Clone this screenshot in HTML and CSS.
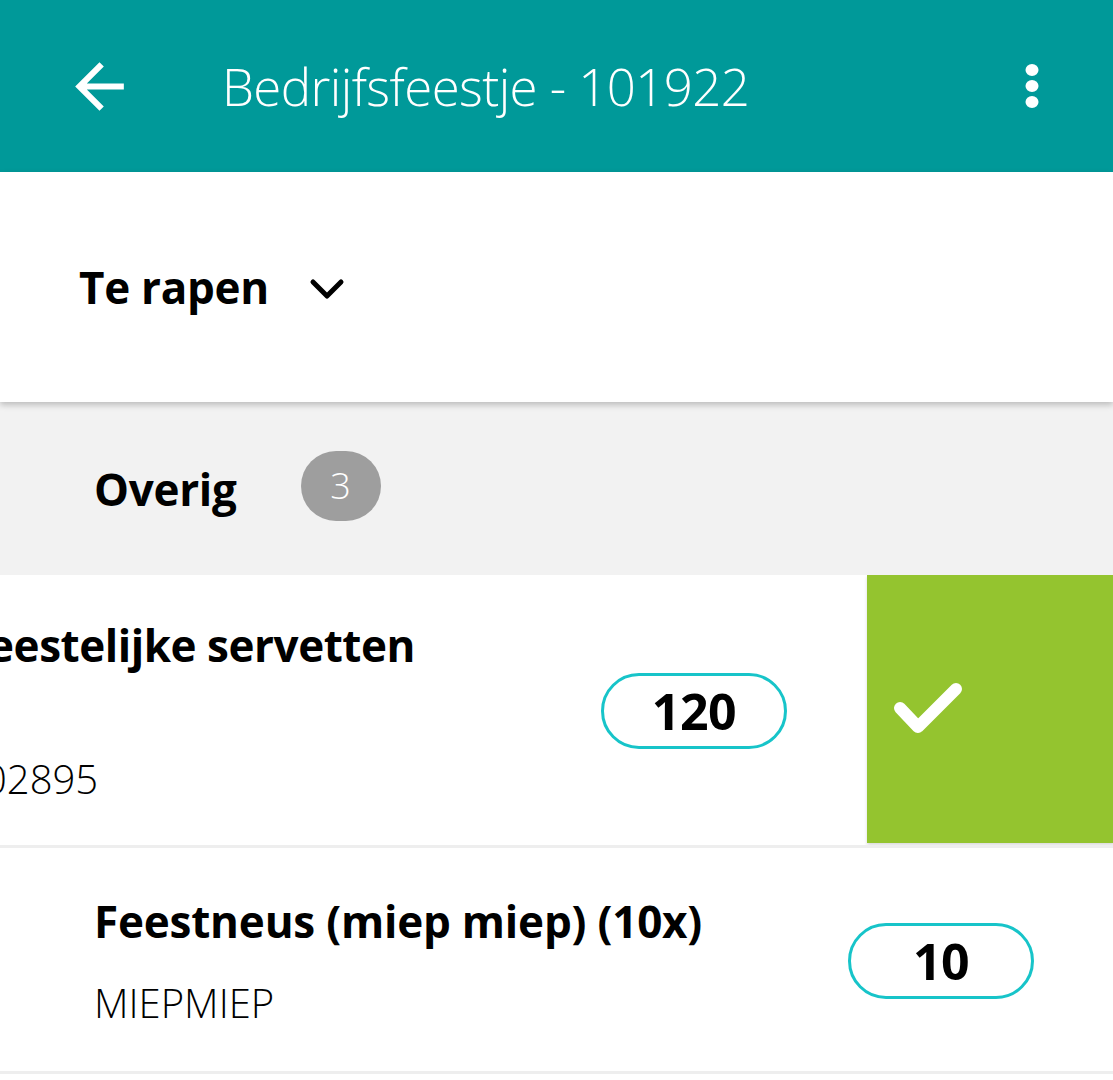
FILE: index.html
```html
<html lang="nl">
<head>
    <meta charset="UTF-8">
    <meta name="viewport" content="width=device-width, initial-scale=1.0">
    <title>Bedrijfsfeestje - 101922</title>
    <link rel="stylesheet" href="styles.css">
</head>
<body>
    <div class="app-bar">
        <button class="icon-button back-button" aria-label="Terug">
            <svg width="73" height="73" viewBox="0 0 24 24">
                <path d="M20 11H7.83l5.59-5.59L12 4l-8 8 8 8 1.41-1.41L7.83 13H20v-2z" fill="#fff"/>
            </svg>
        </button>
        <h1 class="app-title">Bedrijfsfeestje - 101922</h1>
        <button class="icon-button menu-button" aria-label="Menu">
            <svg width="16" height="44" viewBox="0 0 16 44">
                <ellipse cx="8" cy="6" rx="6.5" ry="6"/>
                <ellipse cx="8" cy="22" rx="6.5" ry="6"/>
                <ellipse cx="8" cy="38" rx="6.5" ry="6"/>
            </svg>
        </button>
    </div>

    <div class="filter-bar">
        <span class="filter-label">Te rapen</span>
        <svg class="chevron" width="36" height="22" viewBox="0 0 36 22">
            <path d="M4 4l14 14L32 4" fill="none" stroke="#000" stroke-width="5" stroke-linecap="round" stroke-linejoin="round"/>
        </svg>
    </div>

    <div class="group-header">
        <span class="group-name">Overig</span>
        <span class="badge">3</span>
    </div>

    <div class="row-wrap">
        <div class="pick-row swiped">
            <div class="pick-info">
                <div class="pick-name">Extra feestelijke servetten</div>
                <div class="pick-spacer"></div>
                <div class="pick-sku">87100102895</div>
            </div>
            <div class="qty">120</div>
        </div>
        <div class="swipe-action">
            <svg width="70" height="54" viewBox="0 0 70 54">
                <path d="M7 26l18 19L63 7" fill="none" stroke="#fff" stroke-width="12" stroke-linecap="round" stroke-linejoin="round"/>
            </svg>
        </div>
    </div>

    <div class="row-wrap">
        <div class="pick-row">
            <div class="pick-info">
                <div class="pick-name">Feestneus (miep miep) (10x)</div>
                <div class="pick-sku">MIEPMIEP</div>
            </div>
            <div class="qty">10</div>
        </div>
    </div>
</body>
</html>
```

FILE: styles.css
```css
body {
    margin: 0;
    font-family: "Open Sans", "Noto Sans", sans-serif;
    color: #000;
    background: #fff;
    overflow: hidden;
}

.app-bar {
    height: 172px;
    background-color: #009999;
    display: flex;
    align-items: center;
    color: #fff;
}

.icon-button {
    background: none;
    border: none;
    padding: 0;
    display: flex;
    align-items: center;
    justify-content: center;
    fill: #fff;
}

.back-button {
    margin-left: 63px;
    width: 73px;
    height: 73px;
}

.app-title {
    margin: 0 0 0 86px;
    font-size: 51px;
    font-weight: 300;
    letter-spacing: -0.6px;
    flex: 1;
}

.menu-button {
    margin-right: 73px;
}

.filter-bar {
    height: 230px;
    display: flex;
    align-items: center;
    padding-left: 79px;
    background: #fff;
    box-shadow: 0 3px 6px rgba(0, 0, 0, 0.22);
    position: relative;
}

.filter-label {
    font-size: 44px;
    font-weight: 700;
    letter-spacing: -0.3px;
}

.chevron {
    margin-left: 40px;
    margin-top: 4px;
}

.group-header {
    height: 173px;
    background: #f2f2f2;
    display: flex;
    align-items: center;
    padding-left: 94px;
}

.group-name {
    font-size: 44px;
    font-weight: 700;
    letter-spacing: -0.3px;
}

.badge {
    margin-left: 64px;
    width: 80px;
    height: 70px;
    border-radius: 35px;
    background: #9e9e9e;
    color: #fff;
    font-size: 36px;
    font-weight: 300;
    display: flex;
    align-items: center;
    justify-content: center;
    margin-top: -6px;
}

.row-wrap {
    display: flex;
    overflow: hidden;
    background: #fff;
    border-bottom: 3px solid #eeeeee;
}

.pick-row {
    flex: 0 0 1113px;
    box-sizing: border-box;
    display: flex;
    align-items: center;
    padding: 45px 79px 43px 94px;
}

.pick-row.swiped {
    margin-left: -247px;
    padding-top: 42px;
    padding-bottom: 41px;
}

.pick-info {
    flex: 1;
}

.pick-name {
    font-size: 44px;
    font-weight: 700;
    letter-spacing: -0.2px;
    line-height: 56px;
    white-space: nowrap;
}

.swiped .pick-name {
    letter-spacing: -0.45px;
}

.pick-spacer {
    height: 52px;
}

.pick-sku {
    margin-top: 29px;
    font-size: 40px;
    font-weight: 300;
    line-height: 50px;
    white-space: nowrap;
}

.qty {
    width: 180px;
    height: 70px;
    border: 3px solid #17c4c9;
    border-radius: 38px;
    display: flex;
    align-items: center;
    justify-content: center;
    font-size: 50px;
    font-weight: 700;
    letter-spacing: -0.5px;
    flex-shrink: 0;
}

.swipe-action {
    flex: 0 0 247px;
    box-sizing: border-box;
    margin-left: 1px;
    margin-bottom: 2px;
    padding-left: 26px;
    background: #94c42f;
    display: flex;
    align-items: center;
    box-shadow: 0 2px 3px rgba(0, 0, 0, 0.15);
}
```
